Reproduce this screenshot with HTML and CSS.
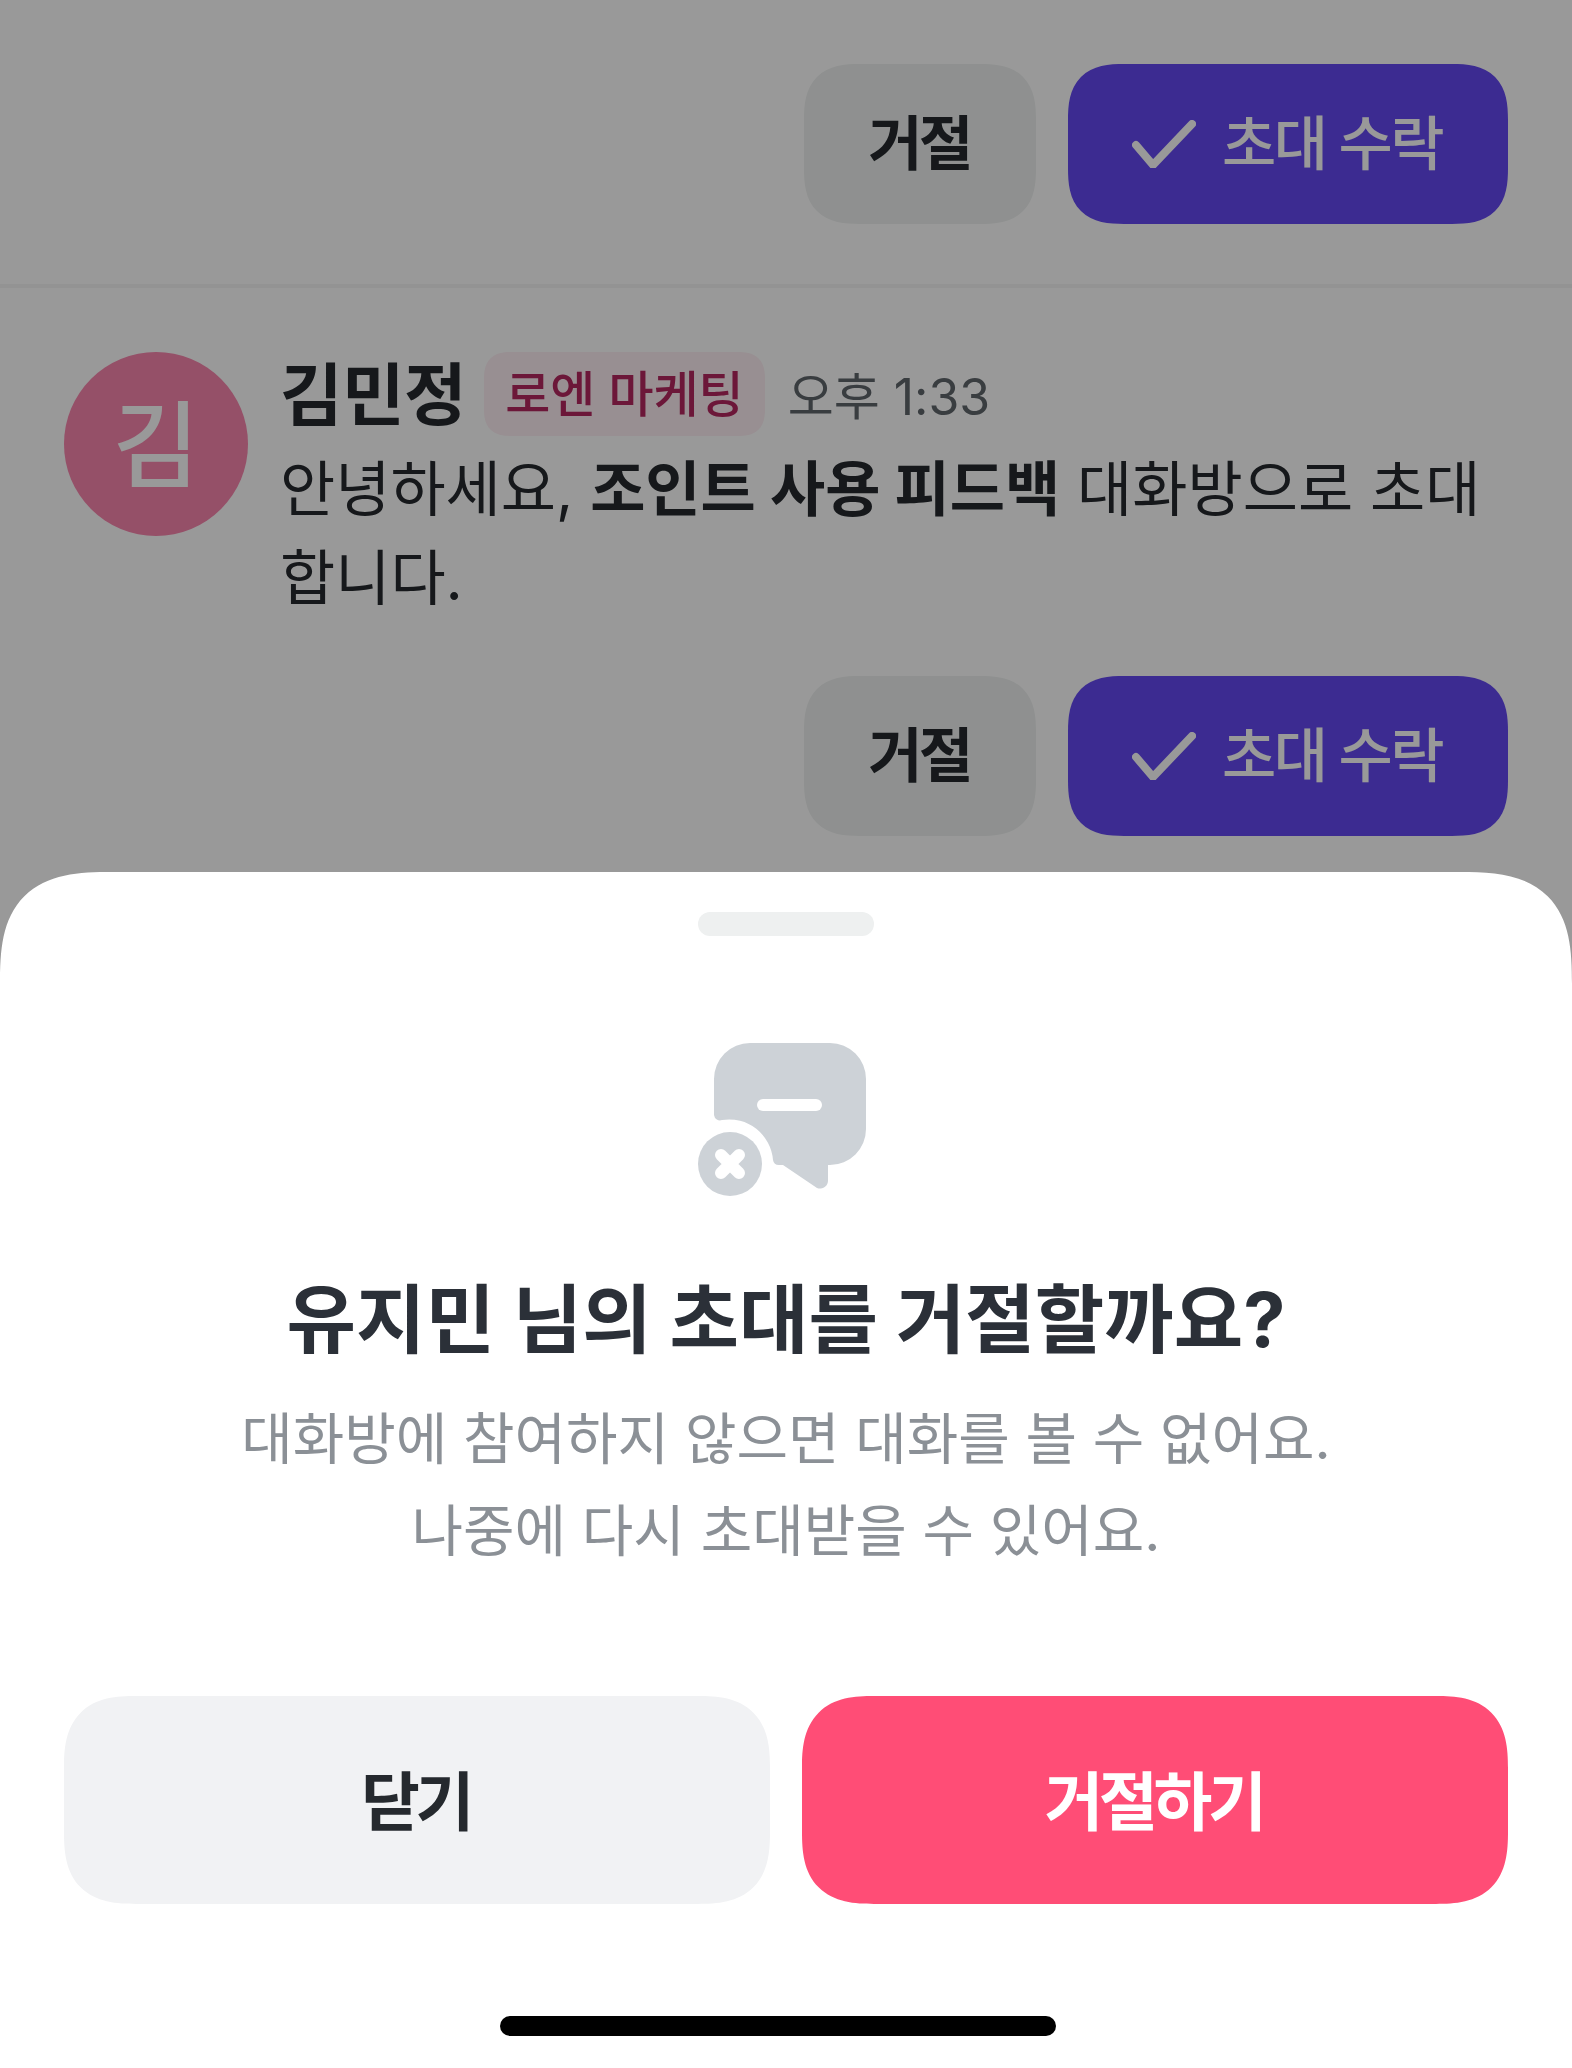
FILE: index.html
```html
<!DOCTYPE html>
<html lang="ko">
<head>
<meta charset="utf-8">
<title>초대 거절</title>
<link rel="stylesheet" href="styles.css">
</head>
<body>
<main class="screen">
  <div class="actions first">
    <button class="btn ghost">거절</button>
    <button class="btn primary">
      <svg class="check" viewBox="0 0 64 48"><path d="M4 25 L21 45 L60 4" fill="none" stroke="#fff" stroke-width="8" stroke-linecap="round" stroke-linejoin="round"/></svg>
      초대 수락
    </button>
  </div>
  <div class="divider"></div>
  <article class="message">
    <div class="avatar">김</div>
    <div class="content">
      <div class="head">
        <span class="name">김민정</span>
        <span class="badge">로엔 마케팅</span>
        <span class="time">오후 1:33</span>
      </div>
      <p class="text">안녕하세요, <b>조인트 사용 피드백</b> 대화방으로 초대합니다.</p>
    </div>
  </article>
  <div class="actions second">
    <button class="btn ghost">거절</button>
    <button class="btn primary">
      <svg class="check" viewBox="0 0 64 48"><path d="M4 25 L21 45 L60 4" fill="none" stroke="#fff" stroke-width="8" stroke-linecap="round" stroke-linejoin="round"/></svg>
      초대 수락
    </button>
  </div>
  <div class="scrim"></div>
  <section class="sheet">
    <div class="handle"></div>
    <svg class="icon" viewBox="0 0 168 154">
      <path fill="#cdd2d7" d="M52 0 H132 A36 36 0 0 1 168 36 V86 A36 36 0 0 1 132 122 H130 V137 A8 8 0 0 1 119 145 L85 122 H81 A6 6 0 0 1 75 117 A44 44 0 0 0 24 77 A6 6 0 0 1 16 72 V36 A36 36 0 0 1 52 0 Z"/>
      <rect x="59" y="56" width="65" height="12" rx="6" fill="#fff"/>
      <circle cx="32" cy="121" r="32" fill="#cdd2d7"/>
      <path d="M23 112 L41 130 M41 112 L23 130" stroke="#fff" stroke-width="12" stroke-linecap="round"/>
    </svg>
    <h2 class="title">유지민 님의 초대를 거절할까요?</h2>
    <p class="desc">대화방에 참여하지 않으면 대화를 볼 수 없어요.<br>나중에 다시 초대받을 수 있어요.</p>
    <div class="sheet-actions">
      <button class="sbtn close">닫기</button>
      <button class="sbtn reject">거절하기</button>
    </div>
    <div class="home"></div>
  </section>
</main>
</body>
</html>
```

FILE: styles.css
```css
* { box-sizing: border-box; }
html, body { margin: 0; padding: 0; }
body {
  font-family: Inter, "Noto Sans CJK KR", sans-serif;
  background: #fff;
  color: #25292e;
}
.screen {
  position: relative;
  width: 1572px;
  height: 2068px;
  overflow: hidden;
  background: #fff;
}
.actions {
  display: flex;
  justify-content: flex-end;
  gap: 32px;
  padding: 0 64px;
}
.actions.first { padding-top: 64px; }
.actions.second { margin-top: 53px; }
.btn {
  height: 160px;
  border: 0;
  border-radius: 56px;
  corner-shape: superellipse(1.4);
  font: 700 59px/1 Inter, "Noto Sans CJK KR", sans-serif;
  letter-spacing: -3.5px;
  padding: 0 2px 2px 0;
  display: flex;
  align-items: center;
  justify-content: center;
  gap: 26px;
}
.ghost { width: 232px; background: #eef1f0; color: #25292e; }
.primary { width: 440px; background: #6549f2; color: #fff; font-weight: 500; letter-spacing: -2.6px; }
.check { width: 64px; height: 48px; margin-top: 2px; }
.divider { height: 4px; margin-top: 60px; background: #f5f6f6; }
.message {
  display: flex;
  gap: 32px;
  padding: 64px 64px 0;
}
.avatar {
  flex: none;
  width: 184px;
  height: 184px;
  border-radius: 50%;
  background: #f885ad;
  color: #fff;
  font-size: 94px;
  font-weight: 500;
  padding-bottom: 10px;
  display: flex;
  align-items: center;
  justify-content: center;
}
.content { flex: 1; min-width: 0; }
.head { display: flex; align-items: center; height: 84px; }
.name { font-size: 68px; font-weight: 700; margin-bottom: 8px; letter-spacing: -0.5px; }
.badge {
  margin-left: 18px;
  height: 84px;
  padding: 0 21px 8px;
  border-radius: 28px;
  corner-shape: superellipse(1.4);
  background: #fdeef3;
  color: #b4275f;
  font-size: 49px;
  font-weight: 500;
  display: flex;
  align-items: center;
}
.time { margin: 0 0 2px 23px; font-size: 50px; color: #60666c; }
.text { margin: 9px 0 0; font-size: 60px; line-height: 89px; }
.text b { font-weight: 700; }
.scrim { position: absolute; inset: 0; background: rgba(0,0,0,.4); }
.sheet {
  position: absolute;
  left: 0;
  right: 0;
  top: 872px;
  bottom: 0;
  background: #fff;
  border-radius: 112px 112px 0 0;
  corner-shape: superellipse(1.5);
  display: flex;
  flex-direction: column;
  align-items: center;
  padding-top: 40px;
}
.handle { width: 176px; height: 24px; border-radius: 12px; background: #eef0f0; }
.icon { width: 168px; height: 154px; margin: 107px 8px 0 0; }
.title { margin: 75px 0 0; font-size: 75.5px; line-height: 96px; font-weight: 700; color: #2b3038; }
.desc { margin: 25px 0 0; font-size: 56px; line-height: 92px; text-align: center; color: #8b9096; }
.sheet-actions {
  align-self: stretch;
  display: grid;
  grid-template-columns: 1fr 1fr;
  gap: 32px;
  padding: 0 64px;
  margin-top: 119px;
}
.sbtn {
  height: 208px;
  border: 0;
  border-radius: 72px;
  corner-shape: superellipse(1.4);
  font: 700 64px/1 Inter, "Noto Sans CJK KR", sans-serif;
  letter-spacing: -4.4px;
  padding: 3px 3px 0 0;
}
.close { background: #f1f2f4; color: #25292e; }
.reject { background: #ff4d76; color: #fff; }
.home {
  position: absolute;
  left: 500px;
  bottom: 32px;
  width: 556px;
  height: 20px;
  border-radius: 10px;
  background: #000;
}
```
